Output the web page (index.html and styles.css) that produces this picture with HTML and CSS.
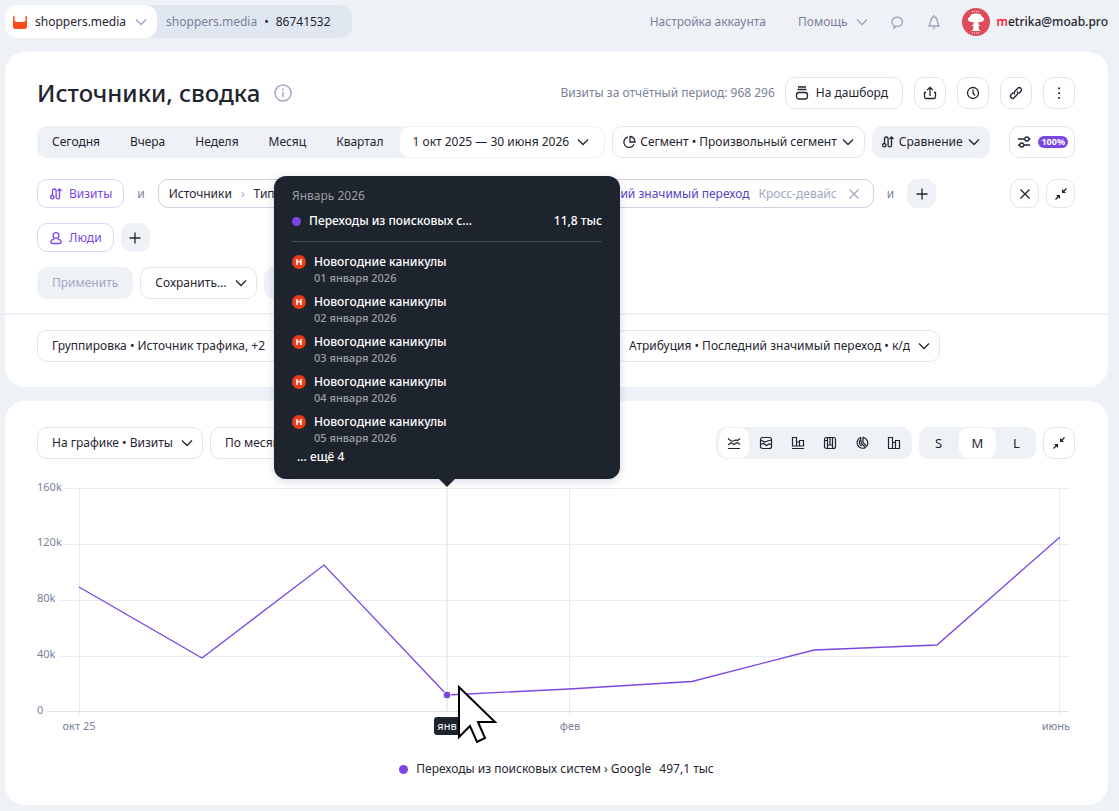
FILE: index.html
```html
<!DOCTYPE html>
<html lang="ru">

<head>
    <meta charset="utf-8">
    <meta name="viewport" content="width=device-width, initial-scale=1">
    <title>Источники, сводка</title>
    <link rel="stylesheet" href="styles.css">
</head>

<body>

    <!-- Icons that are used more than once -->
    <svg class="sprite" aria-hidden="true">
        <symbol id="visits" viewBox="0 0 16 16">
            <path d="M4.500 9.500V4.800a1.800 1.800 0 0 1 3.600 0v6.400a1.700 1.700 0 0 0 3.400 0V3.200M9.500 5l2-2 2 2" />
            <circle cx="4.300" cy="11.200" r="1.700" />
        </symbol>
        <symbol id="collapse" viewBox="0 0 16 16">
            <path d="M13.500 2.500 10 6M2.500 13.500 6 10" />
            <path class="solid" d="M9 3v4h4zM7 13V9H3z" />
        </symbol>
        <symbol id="plus" viewBox="0 0 16 16">
            <path d="M8 2.500v11M2.500 8h11" />
        </symbol>
        <symbol id="close" viewBox="0 0 16 16">
            <path d="m3.500 3.500 9 9m0-9-9 9" />
        </symbol>
        <symbol id="down" viewBox="0 0 16 16">
            <path d="m3 5.500 5 5 5-5" />
        </symbol>
    </svg>

    <!-- Top bar -->
    <header class="topbar">
        <div class="crumbs">
            <button class="site" type="button">
                <svg class="icon" viewBox="0 0 16 16" aria-hidden="true">
                    <path class="logo" d="M1 3Q1 1.500 2.500 1.500V6a2 2 0 0 0 2 2h7a2 2 0 0 0 2-2V1.500Q15 1.500 15 3v9.500a2.500 2.500 0 0 1-2.500 2.500h-9A2.500 2.500 0 0 1 1 12.500z" />
                </svg>
                shoppers.media
                <svg class="icon pale"><use href="#down" /></svg>
            </button>
            <a class="counter" href="#"><span>shoppers.media</span> <i>•</i> 86741532</a>
        </div>
        <nav class="account">
            <a href="#">Настройка аккаунта</a>
            <button class="help" type="button">Помощь <svg class="icon pale"><use href="#down" /></svg></button>
            <button type="button" aria-label="Сообщения">
                <svg class="icon pale" viewBox="0 0 16 16"><path d="M4 14v-2.400A5.300 4.700 0 1 1 8 12.500c-.8 0-1.500-.1-2-.3z" /></svg>
            </button>
            <button type="button" aria-label="Уведомления">
                <svg class="icon pale" viewBox="0 0 16 16"><path d="M8 2.500c-2.300.6-3 2.200-3.300 4.500C4.400 9.300 3.500 10 3 12h10c-.5-2-1.400-2.700-1.700-5C11 4.700 10.300 3.100 8 2.500zM8 1v1.500M6.800 14.200h2.400" /></svg>
            </button>
            <a class="user" href="#">
                <svg class="avatar" viewBox="0 0 28 28" aria-hidden="true">
                    <circle cx="14" cy="14" r="14" fill="#df4b5b" />
                    <path fill="#fff" d="M8 13.500c-2.600-.4-3-4 0-4.500C8 6.500 11 5.500 14 5.500S20 6.500 20 9c3 .5 2.600 4.100 0 4.500-1 .8-2.500.5-3.500.3v2.700l2 .8-2 .9.500 3.500 2 1.300H9l2-1.300.5-3.500-2-.9 2-.8v-2.700c-1 .2-2.500.5-3.500-.3z" />
                    <path stroke="#fff" stroke-dasharray="1 1" d="M10 3.500h8M10 25h8" />
                </svg>
                <span><i>m</i>etrika@moab.pro</span>
            </a>
        </nav>
    </header>

    <main>
        <!-- Report header and filters -->
        <section class="card report">
            <div class="row heading">
                <h1>Источники, сводка</h1>
                <svg class="info" viewBox="0 0 18 18" aria-hidden="true">
                    <circle cx="9" cy="9" r="8" />
                    <path d="M9 8v5M9 4.500v2" />
                </svg>
                <span class="total">Визиты за отчётный период: 968 296</span>
                <button class="btn dashboard" type="button">
                    <svg class="icon" viewBox="0 0 16 16" aria-hidden="true"><path d="M4 2h8M3.500 4.500h9" /><rect x="2.500" y="7.500" width="11" height="6.500" rx="2.500" /></svg>
                    На дашборд
                </button>
                <div class="actions">
                    <button class="btn square" type="button" aria-label="Экспорт">
                        <svg class="icon" viewBox="0 0 16 16"><path d="M8 11V2.500M5.200 5 8 2.300 10.800 5M4 7.500H2.500V12A1.500 1.500 0 0 0 4 13.500h8a1.500 1.500 0 0 0 1.500-1.500V7.500H12" /></svg>
                    </button>
                    <button class="btn square" type="button" aria-label="История">
                        <svg class="icon" viewBox="0 0 16 16"><circle cx="8" cy="8" r="5.500" /><path d="M8 4.500V8l2 2.500" /></svg>
                    </button>
                    <button class="btn square" type="button" aria-label="Ссылка">
                        <svg class="icon" viewBox="0 0 16 16"><path d="M7 9.500a2 2 0 0 1-.2-3l3-3.200a2 2 0 0 1 3.100 2.900L10.700 8.500M9 6.500a2 2 0 0 1 .2 3l-3 3.200a2 2 0 0 1-3.100-2.900L5.300 7.500" /></svg>
                    </button>
                    <button class="btn square" type="button" aria-label="Ещё">
                        <svg class="icon" viewBox="0 0 16 16"><path class="solid" d="M7.200 2.500h1.800v1.800H7.200zM7.200 7.200h1.800V9H7.200zM7.200 12h1.800v1.800H7.200z" /></svg>
                    </button>
                </div>
            </div>

            <div class="row periods">
                <div class="segmented dates">
                    <button type="button">Сегодня</button>
                    <button type="button">Вчера</button>
                    <button type="button">Неделя</button>
                    <button type="button">Месяц</button>
                    <button type="button">Квартал</button>
                    <button class="active range" type="button">1 окт 2025 — 30 июня 2026 <svg class="icon"><use href="#down" /></svg></button>
                </div>
                <button class="btn segment" type="button">
                    <svg class="icon" viewBox="0 0 16 16" aria-hidden="true"><path d="M6.800 3a5.300 5.300 0 1 0 6.200 7.200M9 2.500V8h5a5.200 5.200 0 0 0-5-5.500z" /></svg>
                    Сегмент • Произвольный сегмент
                    <svg class="icon"><use href="#down" /></svg>
                </button>
                <button class="btn gray compare" type="button">
                    <svg class="icon"><use href="#visits" /></svg>
                    Сравнение
                    <svg class="icon"><use href="#down" /></svg>
                </button>
                <button class="btn accuracy" type="button" aria-label="Точность 100%">
                    <svg class="icon" viewBox="0 0 16 16"><path d="M2 5h6.500M13 5h1.500M2 11h2M8 11h6" /><circle cx="10.800" cy="5" r="2" /><circle cx="5.800" cy="11" r="2" /></svg>
                    <span class="badge">100%</span>
                </button>
            </div>

            <div class="row filters">
                <button class="btn chip" type="button"><svg class="icon"><use href="#visits" /></svg> Визиты</button>
                <span class="and">и</span>
                <div class="condition">
                    <span>Источники</span>
                    <span class="sep">›</span>
                    <span>Тип</span>
                    <a href="#">Последний значимый переход</a>
                    <span class="off">Кросс-девайс</span>
                    <button type="button" aria-label="Удалить условие"><svg class="icon"><use href="#close" /></svg></button>
                </div>
                <span class="and">и</span>
                <button class="btn small gray" type="button" aria-label="Добавить условие"><svg class="icon"><use href="#plus" /></svg></button>
                <div class="tools">
                    <button class="btn small" type="button" aria-label="Сбросить"><svg class="icon"><use href="#close" /></svg></button>
                    <button class="btn small" type="button" aria-label="Свернуть фильтр"><svg class="icon"><use href="#collapse" /></svg></button>
                </div>
            </div>

            <div class="row people">
                <button class="btn chip" type="button">
                    <svg class="icon" viewBox="0 0 16 16" aria-hidden="true"><circle cx="8" cy="5.500" r="2.900" /><path d="M6.300 9.200C4 9.700 2.800 10.800 2.800 12c0 1 .9 1.500 2.200 1.500h6c1.300 0 2.200-.5 2.200-1.500 0-1.200-1.200-2.300-3.500-2.800" /></svg>
                    Люди
                </button>
                <button class="btn small gray" type="button" aria-label="Добавить условие по людям"><svg class="icon"><use href="#plus" /></svg></button>
            </div>

            <div class="row apply">
                <button class="btn gray" type="button" disabled>Применить</button>
                <select class="btn" aria-label="Сохранить сегмент">
                    <option>Сохранить...</option>
                </select>
                <button class="btn square gray" type="button" aria-label="Удалить сегмент"><svg class="icon"><use href="#close" /></svg></button>
            </div>

            <div class="row grouping">
                <button class="btn group" type="button">Группировка • Источник трафика, +2</button>
                <select class="btn goal" aria-label="Цель">
                    <option></option>
                </select>
                <select class="btn" aria-label="Атрибуция">
                    <option>Атрибуция • Последний значимый переход • к/д</option>
                </select>
            </div>
        </section>

        <!-- Chart -->
        <section class="card graph">
            <div class="row">
                <select class="btn" aria-label="Метрика">
                    <option>На графике • Визиты</option>
                </select>
                <select class="btn" aria-label="Детализация">
                    <option>По месяцам</option>
                </select>
                <div class="segmented views">
                    <button class="active" type="button" aria-label="Линии">
                        <svg class="icon" viewBox="0 0 16 16"><path d="m2 3.500 3 2.500h2.500L10 5l1.500.5L14 3.500M2 10l3-2.300 3 1.800 3-2 3 2M2 13.500h12" /></svg>
                    </button>
                    <button type="button" aria-label="Области">
                        <svg class="icon" viewBox="0 0 16 16"><rect x="2.500" y="2.500" width="11" height="11" rx="2" /><path d="m2.500 5 4 2 3-1 4-1M2.500 9.500l3-1 3 2 2.500-1.500 2.500.5" /></svg>
                    </button>
                    <button type="button" aria-label="Колонки с накоплением">
                        <svg class="icon" viewBox="0 0 16 16"><path d="M2 13.500h12M2.500 11V2.500h4V11zM6.500 7h3v4h-3M9.500 5.500h4V11h-4z" /></svg>
                    </button>
                    <button type="button" aria-label="Карта">
                        <svg class="icon" viewBox="0 0 16 16"><rect x="2.500" y="2.500" width="11" height="11" rx="2" /><path d="M5.500 2.500v11M10.500 2.500v11M2.500 5.500h3M5.500 10h5M8 2.500V10" /></svg>
                    </button>
                    <button type="button" aria-label="Круговая">
                        <svg class="icon" viewBox="0 0 16 16"><path d="M6.500 2.500a5.600 5.600 0 1 0 5 10L7.500 8.500zM9 2.300v5.200l3.700 3.600A5.600 5.600 0 0 0 9 2.300zM6.500 5a3.500 3.500 0 0 0 1.500 6" /></svg>
                    </button>
                    <button type="button" aria-label="Колонки">
                        <svg class="icon" viewBox="0 0 16 16"><path d="M2.500 13.500v-11h4v11zM6.500 7.500h3v6h-3M9.500 5.500h4v8h-4z" /></svg>
                    </button>
                </div>
                <div class="segmented sizes">
                    <button type="button">S</button>
                    <button class="active" type="button">M</button>
                    <button type="button">L</button>
                </div>
                <button class="btn square" type="button" aria-label="Свернуть график"><svg class="icon"><use href="#collapse" /></svg></button>
            </div>

            <div class="chart">
                <svg viewBox="0 0 1038 264" role="img" aria-label="Визиты по месяцам">
                    <g class="grid">
                        <path d="M27 9.500h1005M27 65.500h1005M21 121.500h1011M21 177.500h1011" />
                        <path d="M42.500 9v227M532.500 9v227M1022.500 9v227" />
                        <path class="axis" d="M10 232.500h1022M410 9v223" />
                    </g>
                    <g class="labels">
                        <text x="0" y="12">160k</text>
                        <text x="0" y="67">120k</text>
                        <text x="0" y="123">80k</text>
                        <text x="0" y="179">40k</text>
                        <text x="0" y="235">0</text>
                        <g text-anchor="middle">
                            <text x="42" y="251">окт 25</text>
                            <text x="533" y="251">фев</text>
                        </g>
                        <text x="1033" y="251" text-anchor="end">июнь</text>
                    </g>
                    <polyline class="line" points="42,108 165,179 287,86 410,216 532,210 655,202.500 777,171 900,166 1023,58" />
                    <circle class="point" cx="410" cy="216" r="4" />
                    <rect class="mark" x="397" y="238" width="28" height="18" rx="3" />
                    <text class="mark-text" x="410" y="251" text-anchor="middle">янв</text>
                    <path class="cursor" d="M422 208v50l11-11 7 16 8-4-7-16h17z" />
                </svg>

                <div class="tooltip">
                    <p class="month">Январь 2026</p>
                    <p class="value"><i class="dot"></i> Переходы из поисковых с... <b>11,8 тыс</b></p>
                    <ul>
                        <li><i>Н</i><span>Новогодние каникулы</span><small>01 января 2026</small></li>
                        <li><i>Н</i><span>Новогодние каникулы</span><small>02 января 2026</small></li>
                        <li><i>Н</i><span>Новогодние каникулы</span><small>03 января 2026</small></li>
                        <li><i>Н</i><span>Новогодние каникулы</span><small>04 января 2026</small></li>
                        <li><i>Н</i><span>Новогодние каникулы</span><small>05 января 2026</small></li>
                    </ul>
                    <p class="more">... ещё 4</p>
                </div>
            </div>

            <p class="legend"><i class="dot"></i> Переходы из поисковых систем › Google <span>497,1 тыс</span></p>
        </section>
    </main>

</body>
</html>
```

FILE: styles.css
```css
* {
    box-sizing: border-box;
}

body {
    margin: 0;
    padding: 5px 11px 6px 5px;
    background: #eef1f6;
    color: #1f2530;
    font: 12px/18px "Noto Sans", "Open Sans", sans-serif;
}

p,
h1,
ul {
    margin: 0;
    padding: 0;
}

a {
    color: inherit;
    text-decoration: none;
}

i {
    font-style: normal;
}

button,
select {
    margin: 0;
    padding: 0;
    border: 0;
    background: none;
    color: inherit;
    font: inherit;
    white-space: nowrap;
    cursor: pointer;
}

.sprite {
    display: none;
}

.icon {
    flex: none;
    width: 16px;
    height: 16px;
    fill: none;
    stroke: currentColor;
    stroke-width: 1.3;
}

.solid {
    fill: currentColor;
    stroke: none;
}

.pale {
    color: #9aa3bd;
}

/* Top bar */
.topbar {
    display: flex;
    justify-content: space-between;
    align-items: center;
    height: 33px;
    margin-bottom: 14px;
}

.crumbs {
    display: flex;
    height: 33px;
    border-radius: 12px;
    background: #e1e7f1;
}

.site {
    display: flex;
    align-items: center;
    gap: 7px;
    padding: 0 8px 0 7px;
    border-radius: 12px;
    background: #fff;
}

.logo {
    fill: #fc4a1e;
    stroke: none;
}

.counter {
    display: flex;
    align-items: center;
    gap: 7px;
    padding: 0 21px 0 9px;
}

.counter span {
    color: #78819a;
}

.account {
    display: flex;
    align-items: center;
    gap: 20px;
    color: #78819a;
}

.account button {
    display: flex;
    align-items: center;
}

.account .help {
    gap: 6px;
    margin-left: 12px;
}

.user {
    display: flex;
    align-items: center;
    gap: 7px;
    color: #1f2530;
    font-weight: 500;
}

.user i {
    color: #f00;
}

.avatar {
    width: 28px;
    height: 28px;
}

/* Cards */
.card {
    margin-bottom: 14px;
    border-radius: 20px;
    background: #fff;
}

.card:last-child {
    margin-bottom: 0;
}

.row {
    display: flex;
    align-items: center;
    gap: 7px;
    padding: 0 33px 0 32px;
}

.btn {
    display: flex;
    flex: none;
    align-items: center;
    justify-content: center;
    gap: 6px;
    height: 32px;
    padding: 0 14px;
    border: 1px solid #e4e5f0;
    border-radius: 10px;
    background-color: #fff;
}

select.btn {
    appearance: none;
    padding-right: 29px;
    background-image: url("data:image/svg+xml,%3Csvg xmlns='http://www.w3.org/2000/svg' width='16' height='16' fill='none' stroke='%231f2530' stroke-width='1.3'%3E%3Cpath d='m3 5.500 5 5 5-5'/%3E%3C/svg%3E");
    background-repeat: no-repeat;
    background-position: right 7px center;
}

.square {
    width: 32px;
    padding: 0;
}

.small {
    width: 29px;
    height: 29px;
    padding: 0;
}

.gray {
    border-color: #eef1f6;
    background-color: #eef1f6;
}

.btn:disabled {
    color: #a0a8bf;
}

.chip {
    gap: 5px;
    height: 29px;
    padding: 0 11px 0 10px;
    border-color: #ddd3fb;
    color: #7b46e3;
}

.segmented {
    display: flex;
    height: 32px;
    border-radius: 10px;
    background: #eef1f6;
}

.segmented button {
    display: flex;
    align-items: center;
    justify-content: center;
    border: 1px solid #eef1f6;
    border-radius: 10px;
}

.segmented .active {
    background: #fff;
}

/* Report header */
.heading {
    padding-top: 25px;
}

h1 {
    font-size: 24px;
    line-height: 32px;
    font-weight: 500;
}

.info {
    width: 18px;
    height: 18px;
    margin-left: 7px;
    fill: none;
    stroke: #a0a9c2;
    stroke-width: 1.5;
}

.total {
    margin-left: auto;
    margin-right: 3px;
    color: #78819a;
}

.dashboard {
    padding-left: 8px;
}

.actions {
    display: flex;
    gap: 11px;
    margin-left: 4px;
}

.periods {
    margin-top: 17px;
}

.dates button {
    padding: 0 14px;
}

.dates .range {
    gap: 6px;
    padding: 0 13px;
}

.segment {
    padding: 0 8px;
    gap: 3px;
}

.compare {
    padding: 0 7px;
    gap: 3px;
}

.accuracy {
    margin-left: auto;
    padding: 0 6px;
}

.badge {
    padding: 0 3px;
    border-radius: 6px;
    background: #7b46e3;
    color: #fff;
    font-size: 9px;
    line-height: 12px;
    font-weight: 700;
}

.filters {
    margin-top: 21px;
}

.and {
    padding: 0 6px;
    color: #78819a;
}

.condition {
    display: flex;
    flex: 0 1 716px;
    align-items: center;
    gap: 9px;
    height: 29px;
    padding: 0 11px 0 10px;
    border: 1px solid #cdd2e0;
    border-radius: 10px;
    white-space: nowrap;
}

.condition a {
    margin-left: auto;
    color: #4f43c4;
}

.condition button {
    display: flex;
}

.sep,
.off,
.condition button {
    color: #a0a8bf;
}

.tools {
    display: flex;
    gap: 7px;
    margin-left: auto;
}

.people {
    margin-top: 15px;
}

.apply {
    margin-top: 15px;
    padding-bottom: 14px;
    border-bottom: 2px solid #eef1f6;
}

.grouping {
    padding-top: 15px;
    padding-bottom: 25px;
}

.goal {
    width: 320px;
}

/* Chart */
.graph {
    padding-top: 26px;
    padding-bottom: 27px;
}

.views {
    margin-left: auto;
    padding: 0 2px;
}

.views button {
    width: 32px;
}

.views .icon {
    stroke-width: 1.2;
}

.sizes button {
    width: 39px;
    font-size: 13px;
}

.chart {
    position: relative;
    margin: 20px 33px 0 32px;
}

.chart > svg {
    display: block;
    width: 100%;
}

.grid {
    fill: none;
    stroke: #e9eaf3;
}

.axis {
    stroke: #dcdee9;
}

.labels {
    fill: #78819a;
    font-size: 11px;
}

.line {
    fill: none;
    stroke: #7b46e3;
    stroke-width: 1.3;
}

.point {
    fill: #7b46e3;
    stroke: #fff;
}

.mark {
    fill: #1e242d;
}

.mark-text {
    fill: #fff;
    font-size: 11px;
}

.cursor {
    fill: #fff;
    stroke: #000;
    stroke-width: 2;
}

.dot {
    flex: none;
    width: 9px;
    height: 9px;
    border-radius: 50%;
    background: #7b46e3;
}

.tooltip {
    position: absolute;
    bottom: 100%;
    left: 39.5%;
    width: 346px;
    padding: 11px 18px 13px;
    border-radius: 12px;
    background: #1e242d;
    box-shadow: 0 2px 8px rgba(60, 50, 120, 0.2);
    color: #fff;
    transform: translateX(-50%);
}

/* Little arrow that points at the hovered month */
.tooltip::after {
    content: "";
    position: absolute;
    top: 100%;
    left: 50%;
    border: 8px solid transparent;
    border-top-color: #1e242d;
    border-bottom: 0;
    transform: translateX(-50%);
}

.month {
    color: #9a9ea6;
}

.value {
    display: flex;
    align-items: center;
    gap: 8px;
    margin-top: 6px;
    padding-bottom: 10px;
    border-bottom: 1px solid #474c58;
    line-height: 20px;
    font-weight: 500;
}

.value b {
    margin-left: auto;
    font-weight: 500;
}

.tooltip ul {
    display: grid;
    gap: 8px;
    margin-top: 11px;
    list-style: none;
}

.tooltip li {
    display: grid;
    grid-template-columns: 14px 1fr;
    column-gap: 8px;
    align-items: center;
    font-weight: 500;
}

.tooltip li i {
    border-radius: 50%;
    background: #e63c19;
    font-size: 9px;
    line-height: 14px;
    font-weight: 700;
    text-align: center;
}

.tooltip small {
    grid-column: 2;
    color: #9a9ea6;
    font-size: 11px;
    line-height: 14px;
}

.more {
    margin-top: 3px;
    padding-left: 5px;
    font-weight: 500;
}

.legend {
    display: flex;
    align-items: center;
    justify-content: center;
    gap: 8px;
    margin-top: 17px;
}
```
